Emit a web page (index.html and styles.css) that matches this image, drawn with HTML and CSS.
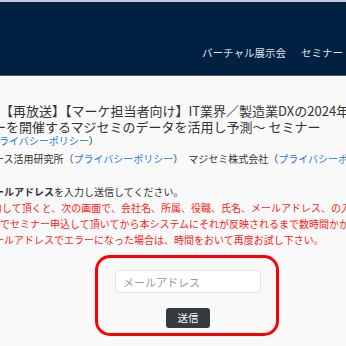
FILE: index.html
```html
<!DOCTYPE html>
<html lang="ja">
<head>
<meta charset="utf-8">
<title>マジセミ</title>
<link rel="stylesheet" href="styles.css">
</head>
<body>
<div class="topline"></div>
<header class="site-header">
  <nav class="nav">
    <a class="nav-item" href="#">バーチャル展示会</a>
    <a class="nav-item" href="#">セミナー・イベント</a>
  </nav>
</header>
<main class="content">
  <h1 class="title">【再放送】【マーケ担当者向け】IT業界／製造業DXの2024年を予測<br>ーを開催するマジセミのデータを活用し予測～ セミナー</h1>
  <p class="org org-first">（<a class="link" href="#">プライバシーポリシー</a>）</p>
  <p class="org org-second">ソース活用研究所（<a class="link" href="#">プライバシーポリシー</a>）　マジセミ株式会社（<a class="link" href="#">プライバシーポリシー</a>）</p>
  <div class="notice">
    <p class="notice-line lead-line"><b>メールアドレス</b>を入力し送信してください。</p>
    <p class="notice-line warn warn-a">入力して頂くと、次の画面で、会社名、所属、役職、氏名、メールアドレス、の入力</p>
    <p class="notice-line warn warn-b">画でセミナー申込して頂いてから本システムにそれが反映されるまで数時間かかります</p>
    <p class="notice-line warn lead-line">メールアドレスでエラーになった場合は、時間をおいて再度お試し下さい。</p>
  </div>
  <form class="mail-box">
    <input class="mail-input" type="email" placeholder="メールアドレス">
    <button class="send-btn" type="button">送信</button>
  </form>
</main>
</body>
</html>
```

FILE: styles.css
```css
html, body {
  margin: 0;
  padding: 0;
}
body {
  background: #f9f9f9;
  font-family: "Noto Sans CJK JP", "Noto Sans", sans-serif;
  color: #333;
  overflow: hidden;
  width: 346px;
  height: 346px;
}
.topline {
  height: 2px;
  background: #c8c6de;
}
.site-header {
  height: 73px;
  background: #002142;
  border-bottom: 1px solid #4a5a72;
  box-sizing: content-box;
}
.nav {
  display: flex;
  gap: 15px;
  padding: 43px 0 0 202px;
  white-space: nowrap;
}
.nav-item {
  color: #dfe3ea;
  text-decoration: none;
  font-size: 10.5px;
  line-height: 16px;
}
.content {
  white-space: nowrap;
}
.title {
  margin: 27px 0 0 -7px;
  text-indent: 7px;
  font-size: 13px;
  line-height: 16px;
  font-weight: normal;
  color: #333;
}
.org {
  margin: 0;
  font-size: 10px;
  line-height: 12px;
  color: #333;
}
.org-first {
  text-indent: -21px;
}
.org-second {
  margin-top: 6px;
  text-indent: -16px;
}
.link {
  color: #1f7ae0;
  text-decoration: none;
}
.notice {
  margin-top: 19px;
}
.notice-line {
  margin: 0;
  font-size: 10px;
  line-height: 16px;
}
.lead-line {
  text-indent: -16px;
}
.warn {
  color: #ff1a1a;
}
.warn-a {
  text-indent: -18px;
}
.warn-b {
  text-indent: -10px;
}
.mail-box {
  margin: 7px 0 0 95px;
  width: 184px;
  height: 81px;
  box-sizing: border-box;
  border: 3px solid #ff0000;
  border-radius: 15px;
  padding-top: 12px;
  display: flex;
  flex-direction: column;
  align-items: center;
}
.mail-input {
  width: 146px;
  height: 23px;
  box-sizing: border-box;
  margin-left: 2px;
  border: 1px solid #e3e3e3;
  border-radius: 3px;
  background: #fff;
  padding: 0 7px;
  font-family: "Noto Sans CJK JP", sans-serif;
  font-size: 11px;
  outline: none;
}
.mail-input::placeholder {
  color: #9a9a9a;
}
.send-btn {
  margin-top: 15px;
  margin-left: 2px;
  width: 44px;
  height: 20px;
  padding: 0;
  border: none;
  border-radius: 3px;
  background: #343a40;
  color: #fff;
  font-family: "Noto Sans CJK JP", sans-serif;
  font-size: 10.5px;
  line-height: 20px;
}
```
